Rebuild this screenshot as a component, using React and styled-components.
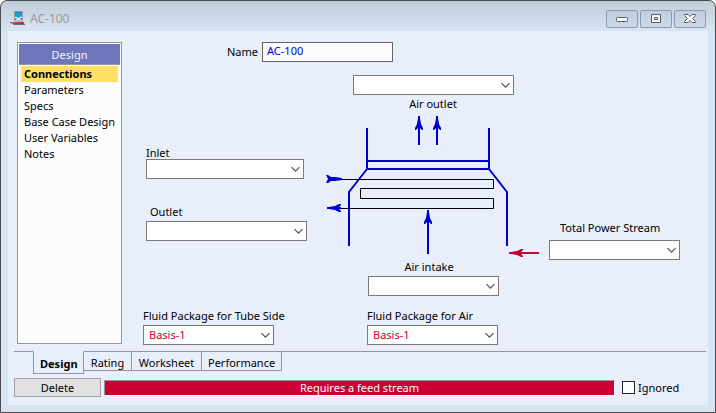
import React from "react";
import styled, { createGlobalStyle } from "styled-components";

const BLUE = "#0000cc";
const RED = "#cc0033";
const FONT = '"Noto Sans", "Open Sans", sans-serif';

const GlobalStyle = createGlobalStyle`
  *, *::before, *::after { box-sizing: border-box; }
  html, body { margin: 0; padding: 0; }
  body { background: #fff; font-family: ${FONT}; font-size: 11px; line-height: 16px; color: #000; }
  button, input, select { font: inherit; color: inherit; margin: 0; }
`;

const Window = styled.div`
  display: flex;
  flex-direction: column;
  min-height: 100vh;
  padding: 0 7px 7px;
  border: 1px solid #4b4b50;
  border-radius: 7px 7px 0 0;
  background: linear-gradient(#c1cddb 0, #d7e4f1 30px, #d7e4f1 100%);
`;

const TitleBar = styled.header`
  display: flex;
  align-items: center;
  gap: 4px;
  height: 30px;
  padding: 6px 2px 0;
`;

const Title = styled.h1`
  flex: 1;
  margin: 0;
  font-size: 12px;
  font-weight: 400;
  color: #95999e;
`;

const WindowButtons = styled.div`
  display: flex;
  gap: 2px;
`;

const WindowButton = styled.button`
  display: flex;
  align-items: center;
  justify-content: center;
  width: 32px;
  height: 18px;
  padding: 0;
  border: 1px solid #8c9ab6;
  border-radius: 2px;
  background: linear-gradient(#c1cddc, #cbd8e6);
`;

const Client = styled.main`
  flex: 1;
  display: flex;
  flex-direction: column;
  padding: 11px 2px 8px 6px;
  background: #e8effa;
`;

const Body = styled.div`
  flex: 1;
  display: flex;
  gap: 21px;
  padding-left: 3px;
`;

const Sidebar = styled.nav`
  flex: none;
  width: 105px;
  margin-bottom: 7px;
  padding: 1px;
  border: 1px solid #969696;
  background: #fcfcfc;
`;

const SidebarTitle = styled.h2`
  margin: 0;
  padding: 3px 0 1px;
  border-bottom: 1px solid #969696;
  background: #6f75bb;
  color: #f0f4ff;
  font-size: 11px;
  font-weight: 400;
  text-align: center;
`;

const PageList = styled.ul`
  margin: 0;
  padding: 1px 2px;
  list-style: none;
`;

const PageLink = styled.a`
  display: block;
  padding-left: 3px;
  color: #000;
  text-decoration: none;
  white-space: nowrap;
  font-weight: ${(p) => (p.$active ? 700 : 400)};
  background: ${(p) => (p.$active ? "#ffe066" : "transparent")};
`;

const Form = styled.form`
  flex: 1;
  display: flex;
  flex-direction: column;
`;

const NameRow = styled.div`
  display: flex;
  align-items: center;
  gap: 4px;
  padding-left: 84px;
  margin-bottom: 13px;
`;

const NameInput = styled.input`
  width: 131px;
  height: 20px;
  padding: 0 4px 3px;
  border: 1px solid #646464;
  border-radius: 0;
  background: #fcfcfc;
  color: ${BLUE};
`;

const Scheme = styled.div`
  display: grid;
  grid-template-columns: 176px 228px 1fr;
`;

const Middle = styled.div`
  grid-column: 2;
  display: flex;
  flex-direction: column;
  align-items: center;
`;

const Side = styled.div`
  display: flex;
  flex-direction: column;
  padding: ${(p) => p.$pad};
  gap: 27px;
`;

const Field = styled.div`
  display: flex;
  flex-direction: ${(p) => (p.$below ? "column-reverse" : "column")};
  align-items: ${(p) => p.$align || "flex-start"};
  gap: ${(p) => p.$gap ?? 3}px;
  line-height: 12px;
`;

const Label = styled.label`
  padding-left: ${(p) => p.$indent || 0}px;
  white-space: nowrap;
`;

const SelectBox = styled.div`
  position: relative;
  width: ${(p) => p.$width}px;
`;

const SelectControl = styled.select`
  display: block;
  appearance: none;
  width: 100%;
  height: 20px;
  padding: 0 20px 1px 5px;
  border: 1px solid #7a7a7a;
  border-radius: 0;
  background: #fdfdfd;
  color: ${RED};
`;

const Chevron = styled.svg`
  position: absolute;
  right: 4px;
  top: 7px;
  pointer-events: none;
`;

const Packages = styled.div`
  display: grid;
  grid-template-columns: 224px 1fr;
  margin-top: 14px;
`;

const TabBar = styled.div`
  display: flex;
  align-items: flex-start;
`;

const TabRule = styled.span`
  flex: ${(p) => (p.$lead ? "0 0 19px" : "1")};
  height: 1px;
  background: #969696;
`;

const Tab = styled.button`
  padding: ${(p) => (p.$active ? "3px 8px 1px 6px" : "3px 6px 0")};
  height: ${(p) => (p.$active ? 23 : 20)}px;
  width: ${(p) => p.$width}px;
  border: 1px solid #969696;
  border-top-color: ${(p) => (p.$active ? "transparent" : "#969696")};
  border-left-width: ${(p) => (p.$active ? 1 : 0)}px;
  background: transparent;
  font-weight: ${(p) => (p.$active ? 700 : 400)};
  text-align: center;
`;

const Footer = styled.footer`
  display: flex;
  align-items: center;
  gap: 3px;
  margin-top: 4px;
`;

const DeleteButton = styled.button`
  width: 87px;
  height: 19px;
  padding: 0;
  border: 1px solid #a0a0a0;
  background: #e1e1e1;
`;

const Status = styled.output`
  flex: 1;
  height: 16px;
  line-height: 14px;
  border: 1px solid;
  border-color: #969696 #fff #fff #969696;
  background: ${RED};
  color: #fff;
  text-align: center;
`;

const Ignored = styled.label`
  display: flex;
  align-items: center;
  gap: 3px;
  width: 84px;
  margin-left: 4px;
`;

const CheckBox = styled.input`
  appearance: none;
  width: 13px;
  height: 13px;
  border: 1px solid #222;
  background: #fff;
  &:checked { background: #333; box-shadow: inset 0 0 0 2px #fff; }
`;

function Select({ id, width, value }) {
  return (
    <SelectBox $width={width}>
      <SelectControl id={id} defaultValue={value || ""}>
        <option value={value || ""}>{value || ""}</option>
      </SelectControl>
      <Chevron width="9" height="7" viewBox="0 0 9 7" aria-hidden="true">
        <path d="M.5 1.2 4.5 5.2 8.5 1.2" fill="none" stroke="#555" strokeWidth="1.2" />
      </Chevron>
    </SelectBox>
  );
}

function SelectField({ id, label, width, value, indent, ...layout }) {
  return (
    <Field {...layout}>
      <Label htmlFor={id} $indent={indent}>{label}</Label>
      <Select id={id} width={width} value={value} />
    </Field>
  );
}

function AppIcon() {
  return (
    <svg width="16" height="16" viewBox="0 0 16 16" aria-hidden="true">
      <path d="M5 8 3 12h11l-2-4z" fill="#aeb6bf" />
      <path d="M5 1h7v8H5z" fill="#10a0e6" />
      <path d="M4 1h9" stroke="#555b62" />
      <path d="M4.5 1v8M12.5 1v8" stroke="#8e99a5" />
      <path d="M5 6.5c2-1 3 2 4 1s2-2 3-1M6 9l2-1 3 1" fill="none" stroke="#eef3f8" strokeWidth="1.2" />
      <path d="M0 11c4 1 8 0 14 0v2H4l-4-1z" fill="#e81c2c" />
      <path d="M3 13.5h12" stroke="#6c7278" />
    </svg>
  );
}

function Arrow({ x, y, turn, length, color = BLUE }) {
  return (
    <g transform={`translate(${x} ${y}) rotate(${turn})`} fill={color}>
      <path d={`M-1 0H1V${length}H-1z`} />
      <path d="M-1 2H1L2 8 4 12V14H3L1 12H-1L-3 14H-4V12L-2 8z" />
    </g>
  );
}

function CoolerDiagram() {
  return (
    <svg width="228" height="151" viewBox="319 110 228 151" role="img" aria-label="Air cooler">
      <Arrow x={419} y={116} turn={0} length={29} />
      <Arrow x={437} y={116} turn={0} length={29} />
      <g fill="none" stroke={BLUE} strokeWidth="2">
        <path d="M367 128V169L349 192V246M489 128V169L507 192V246" />
        <path d="M367 161H489M367 169H489" />
      </g>
      <path
        d="M340 179.5H493.5V188.5H360.5V198.5H493.5V208.5H340"
        fill="none"
        stroke="#000"
      />
      <path d="M326 175h2l3 2h4l7 1v2l-7 1h-4l-3 2h-2l2-4z" fill={BLUE} />
      <Arrow x={327} y={208} turn={-90} length={14} />
      <Arrow x={428} y={210} turn={0} length={44} />
      <Arrow x={509} y={253} turn={-90} length={30} color={RED} />
    </svg>
  );
}

const pages = ["Connections", "Parameters", "Specs", "Base Case Design", "User Variables", "Notes"];
const tabs = [
  { name: "Design", width: 51 },
  { name: "Rating", width: 48 },
  { name: "Worksheet", width: 70 },
  { name: "Performance", width: 80 },
];

export default function App() {
  return (
    <>
      <GlobalStyle />
      <Window>
        <TitleBar>
          <AppIcon />
          <Title>AC-100</Title>
          <WindowButtons>
            <WindowButton aria-label="Minimize">
              <svg width="12" height="10" viewBox="0 0 12 10">
                <rect x=".5" y="3.5" width="11" height="4" rx="1" fill="#fff" stroke="#555b6b" />
              </svg>
            </WindowButton>
            <WindowButton aria-label="Maximize">
              <svg width="12" height="10" viewBox="0 0 12 10">
                <path d="M1.500 .5h9v8h-9zM4.500 3.500v2h3v-2z" fillRule="evenodd" fill="#fff" stroke="#555b6b" />
              </svg>
            </WindowButton>
            <WindowButton aria-label="Close">
              <svg width="12" height="10" viewBox="0 0 12 10">
                <path d="M.5.5h3.500l2 2 2-2h3.500v1L8.500 4.500l3 3v1H8l-2-2-2 2H.5v-1l3-3-3-3z" fill="#fff" stroke="#555b6b" />
              </svg>
            </WindowButton>
          </WindowButtons>
        </TitleBar>
        <Client>
          <Body>
            <Sidebar>
              <SidebarTitle>Design</SidebarTitle>
              <PageList>
                {pages.map((page, i) => (
                  <li key={page}>
                    <PageLink href="#" $active={i === 0}>{page}</PageLink>
                  </li>
                ))}
              </PageList>
            </Sidebar>
            <Form>
              <NameRow>
                <Label htmlFor="name">Name</Label>
                <NameInput id="name" defaultValue="AC-100" />
              </NameRow>
              <Scheme>
                <Middle>
                  <SelectField id="air-outlet" label="Air outlet" width={161} $below $align="center" />
                </Middle>
              </Scheme>
              <Scheme>
                <Side $pad="37px 0 0 3px">
                  <SelectField id="inlet" label="Inlet" width={158} $gap={0} />
                  <SelectField id="outlet" label="Outlet" width={161} indent={4} />
                </Side>
                <CoolerDiagram />
                <Side $pad="112px 0 0 2px">
                  <SelectField id="power" label="Total Power Stream" width={131} indent={11} $gap={6} />
                </Side>
              </Scheme>
              <Scheme>
                <Middle>
                  <SelectField id="air-intake" label="Air intake" width={131} indent={37} />
                </Middle>
              </Scheme>
              <Packages>
                <SelectField id="tube" label="Fluid Package for Tube Side" width={131} value="Basis-1" />
                <SelectField id="air" label="Fluid Package for Air" width={131} value="Basis-1" />
              </Packages>
            </Form>
          </Body>
          <TabBar role="tablist">
            <TabRule $lead />
            {tabs.map((tab, i) => (
              <Tab key={tab.name} role="tab" aria-selected={i === 0} $active={i === 0} $width={tab.width}>
                {tab.name}
              </Tab>
            ))}
            <TabRule />
          </TabBar>
          <Footer>
            <DeleteButton type="button">Delete</DeleteButton>
            <Status>Requires a feed stream</Status>
            <Ignored>
              <CheckBox type="checkbox" />
              Ignored
            </Ignored>
          </Footer>
        </Client>
      </Window>
    </>
  );
}
